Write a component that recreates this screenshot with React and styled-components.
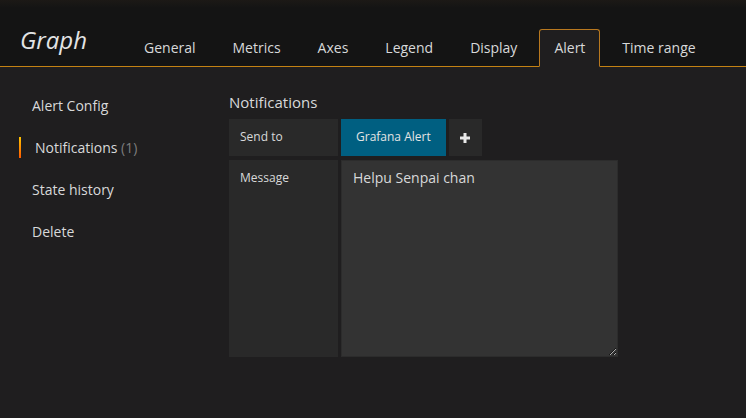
import React from "react";
import styled, { createGlobalStyle } from "styled-components";

const Global = createGlobalStyle`
  html, body { margin: 0; padding: 0; background: #1f1e1f; }
  body { font-family: "Open Sans", "Noto Sans", sans-serif; color: #d8d9da; }
  * { box-sizing: border-box; }
`;

const Page = styled.div`
  width: 746px;
  height: 418px;
  background: #1f1e1f;
  display: flex;
  flex-direction: column;
`;

const Header = styled.header`
  height: 67px;
  display: flex;
  align-items: flex-end;
  padding-left: 20px;
  background: linear-gradient(#1c1916 0px, #141414 8px);
  border-bottom: 1px solid #c48213;
`;

const Title = styled.h1`
  margin: 0 0 11px 0;
  width: 109px;
  font-size: 24px;
  line-height: 30px;
  font-style: italic;
  font-weight: 400;
  color: #e3e4e5;
  align-self: flex-end;
`;

const TabList = styled.nav`
  display: flex;
  align-items: flex-end;
  margin-bottom: -1px;
`;

const Tab = styled.div`
  height: 38px;
  padding: 0 14px;
  margin-right: 7px;
  line-height: 36px;
  font-size: 14px;
  color: #d8d9da;
  border: 1px solid ${(p) => (p.$active ? "#b8781f" : "transparent")};
  border-bottom: 1px solid ${(p) => (p.$active ? "#1f1e1f" : "transparent")};
  border-radius: 3px 3px 0 0;
  background: ${(p) => (p.$active ? "#1f1e1f" : "transparent")};
`;

const Body = styled.div`
  flex: 1;
  display: flex;
`;

const Sidebar = styled.ul`
  list-style: none;
  margin: 0;
  padding: 18px 0 0 0;
  width: 229px;
`;

const SideItem = styled.li`
  position: relative;
  height: 42px;
  line-height: 42px;
  font-size: 14px;
  color: #d8d9da;
  padding-left: ${(p) => (p.$active ? "35px" : "32px")};

  ${(p) =>
    p.$active &&
    `
    &::before {
      content: "";
      position: absolute;
      left: 19px;
      top: 10px;
      width: 2px;
      height: 21px;
      background: linear-gradient(to bottom, #ffc400, #ff5a00);
    }
  `}
`;

const Count = styled.span`
  color: #7d7d7d;
`;

const Main = styled.section`
  padding-top: 25px;
  display: flex;
  flex-direction: column;
`;

const Heading = styled.h3`
  margin: 0 0 7px 0;
  font-size: 15px;
  line-height: 20px;
  font-weight: 400;
  color: #d8d9da;
`;

const Row = styled.div`
  display: flex;
  gap: 3px;
  margin-bottom: 4px;
`;

const Label = styled.div`
  width: 109px;
  height: ${(p) => p.$h || 37}px;
  padding: 0 11px;
  line-height: 36px;
  font-size: 12px;
  color: #d8d9da;
  background: #292929;
`;

const Chip = styled.div`
  height: 37px;
  padding: 0 15px;
  line-height: 36px;
  font-size: 12px;
  color: #e4e4e4;
  background: #005f81;
`;

const AddButton = styled.div`
  width: 33px;
  height: 37px;
  background: #292929;
  display: flex;
  align-items: center;
  justify-content: center;
`;

const TextArea = styled.textarea`
  width: 277px;
  height: 197px;
  margin: 0;
  padding: 7px 11px;
  font-family: "Open Sans", "Noto Sans", sans-serif;
  font-size: 14px;
  line-height: 20px;
  color: #d8d9da;
  background: #333333;
  border: 1px solid #2c2c2c;
  border-radius: 0;
  outline: none;
  resize: both;
`;

const PlusIcon = () => (
  <svg width="10" height="10" viewBox="0 0 10 10">
    <rect x="3.5" y="0" width="3" height="10" fill="#e8e8e8" />
    <rect x="0" y="3.5" width="10" height="3" fill="#e8e8e8" />
  </svg>
);

const tabs = ["General", "Metrics", "Axes", "Legend", "Display", "Alert", "Time range"];

export default function App() {
  return (
    <>
      <Global />
      <Page>
        <Header>
          <Title>Graph</Title>
          <TabList>
            {tabs.map((t) => (
              <Tab key={t} $active={t === "Alert"}>
                {t}
              </Tab>
            ))}
          </TabList>
        </Header>
        <Body>
          <Sidebar>
            <SideItem>Alert Config</SideItem>
            <SideItem $active>
              Notifications <Count>(1)</Count>
            </SideItem>
            <SideItem>State history</SideItem>
            <SideItem>Delete</SideItem>
          </Sidebar>
          <Main>
            <Heading>Notifications</Heading>
            <Row>
              <Label>Send to</Label>
              <Chip>Grafana Alert</Chip>
              <AddButton>
                <PlusIcon />
              </AddButton>
            </Row>
            <Row>
              <Label $h={197}>Message</Label>
              <TextArea defaultValue="Helpu Senpai chan" spellCheck={false} />
            </Row>
          </Main>
        </Body>
      </Page>
    </>
  );
}
